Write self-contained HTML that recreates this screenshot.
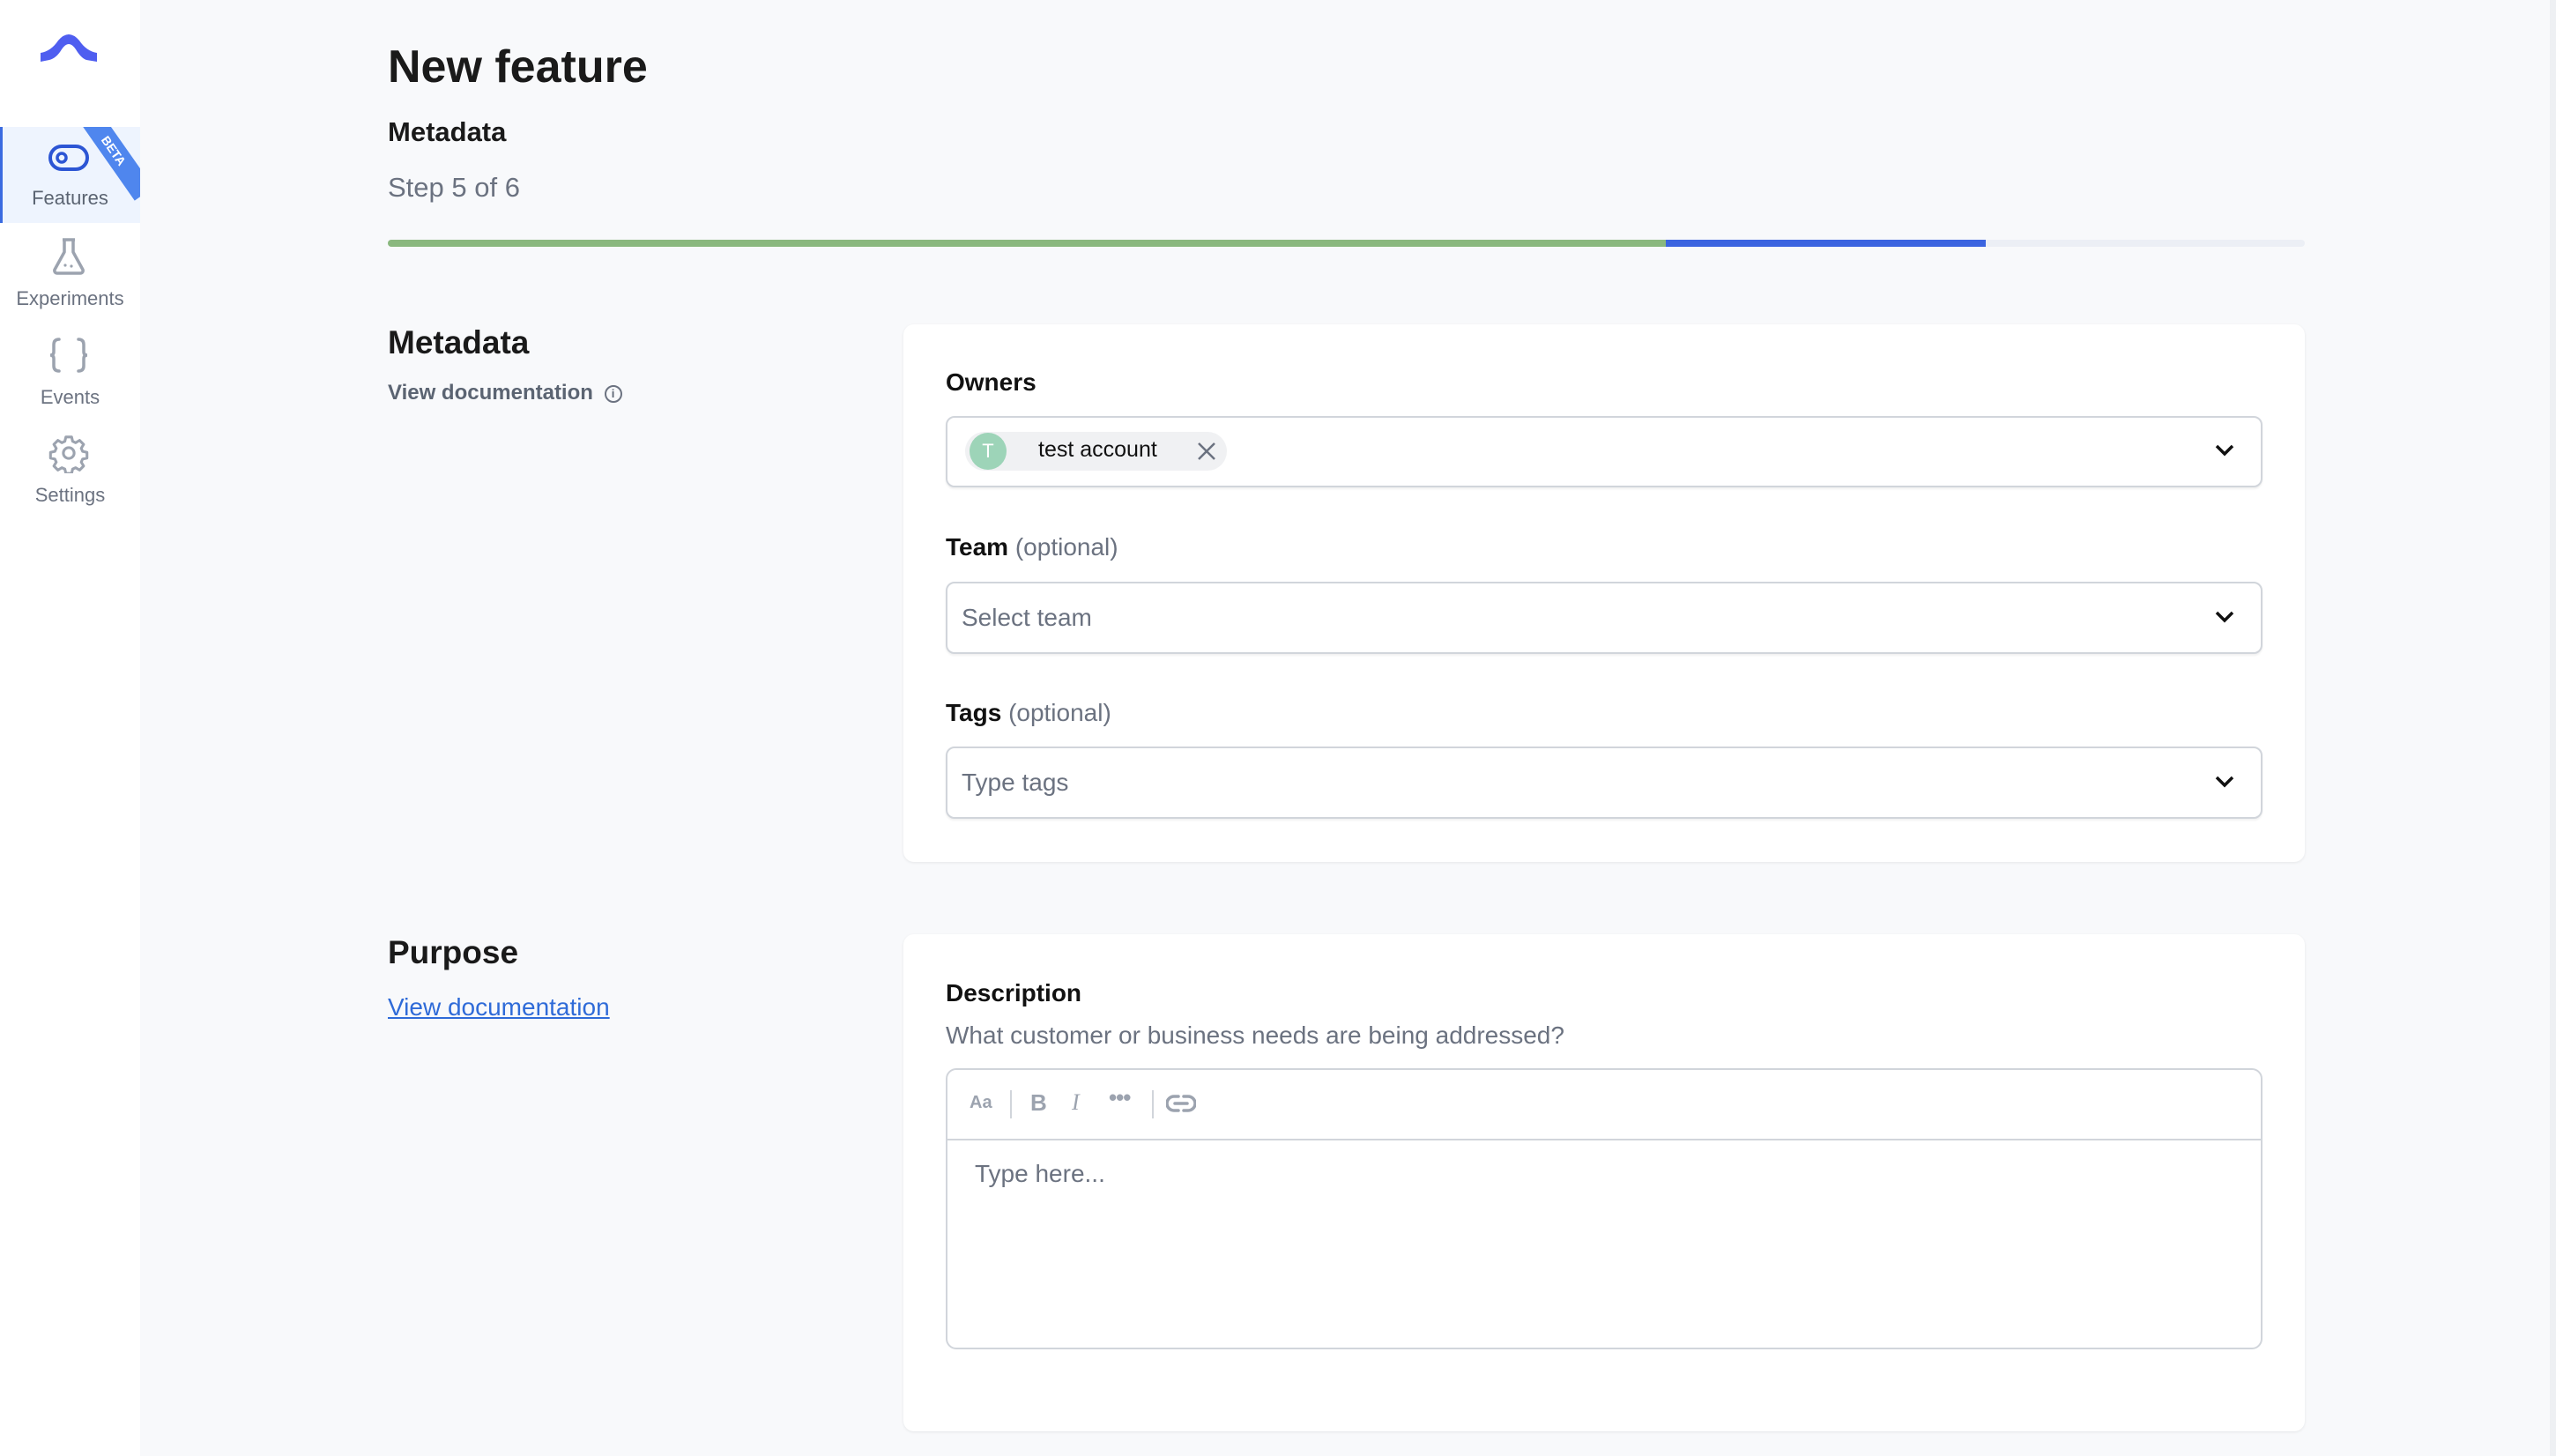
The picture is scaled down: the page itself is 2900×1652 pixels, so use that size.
<!DOCTYPE html>
<html><head><meta charset="utf-8"><style>
*{box-sizing:border-box;margin:0;padding:0}
body{width:2900px;height:1652px;background:#f8f9fb;font-family:"Liberation Sans",sans-serif;position:relative;overflow:hidden;color:#1a1a1a}
.abs{position:absolute}
.side{left:0;top:0;width:159px;height:1652px;background:#fff}
.nav{left:0;width:159px;text-align:center;color:#6b7280;font-size:22px}
.card{background:#fff;border-radius:12px;box-shadow:0 1px 3px rgba(0,0,0,.08)}
.lbl{font-size:28px;font-weight:bold;color:#111}
.opt{font-weight:normal;color:#6b7280}
.inp{border:2px solid #d1d5db;border-radius:10px;background:#fff;box-shadow:0 2px 2px rgba(0,0,0,.06)}
.ph{font-size:28px;color:#6b7280}
</style></head><body>
<div class="abs side"></div>
<div class="abs" style="left:2893px;top:0;width:7px;height:1652px;background:#eef0f3"></div>
<svg class="abs" style="left:44px;top:36px" width="68" height="34" viewBox="0 0 68 34"><path d="M2 24 Q14 22 22 10 Q34 -4 46 10 Q54 22 66 24 L66 34 L54 32 Q48 30 42 20 Q34 8 26 20 Q20 30 12 32 L2 34Z" fill="#4f5ef0"/></svg>
<div class="abs" style="left:0;top:144px;width:159px;height:109px;background:#eef4fe;border-left:3px solid #3b6be0;overflow:hidden">
<div style="position:absolute;right:-30px;top:14px;width:120px;height:26px;background:#4f86ee;transform:rotate(55deg);color:#fff;font-size:14px;font-weight:bold;text-align:center;line-height:26px">BETA</div>
</div>
<svg class="abs" style="left:55px;top:164px" width="46" height="30" viewBox="0 0 46 30"><rect x="2" y="2" width="42" height="26" rx="13" fill="none" stroke="#2c55d4" stroke-width="4"/><circle cx="15" cy="15" r="5" fill="none" stroke="#2c55d4" stroke-width="3.5"/></svg>
<div class="abs nav" style="top:212px;color:#5b6472">Features</div>
<svg class="abs" style="left:59px;top:270px" width="38" height="42" viewBox="0 0 38 42"><path d="M12 2h14M14 2v14L3 36a3 3 0 0 0 3 4h26a3 3 0 0 0 3-4L24 16V2" fill="none" stroke="#9ca3af" stroke-width="3.5" stroke-linejoin="round"/><circle cx="15" cy="31" r="1.6" fill="#9ca3af"/><circle cx="22" cy="32" r="1.6" fill="#9ca3af"/></svg>
<div class="abs nav" style="top:326px">Experiments</div>
<svg class="abs" style="left:55px;top:382px" width="46" height="42" viewBox="0 0 46 42"><path d="M12 3Q6 3 6 9v8Q6 21 2 21Q6 21 6 25v8q0 6 6 6M34 3q6 0 6 6v8q0 4 4 4q-4 0-4 4v8q0 6-6 6" fill="none" stroke="#9ca3af" stroke-width="3.5" stroke-linecap="round"/></svg>
<div class="abs nav" style="top:438px">Events</div>
<svg class="abs" style="left:55px;top:491px" width="46" height="46" viewBox="0 0 24 24"><path d="M10.3 2.5h3.4l.6 2.6 1.8.8 2.3-1.4 2.4 2.4-1.4 2.3.8 1.8 2.6.6v3.4l-2.6.6-.8 1.8 1.4 2.3-2.4 2.4-2.3-1.4-1.8.8-.6 2.6h-3.4l-.6-2.6-1.8-.8-2.3 1.4-2.4-2.4 1.4-2.3-.8-1.8-2.6-.6v-3.4l2.6-.6.8-1.8-1.4-2.3 2.4-2.4 2.3 1.4 1.8-.8z" fill="none" stroke="#9ca3af" stroke-width="1.6" stroke-linejoin="round"/><circle cx="12" cy="12" r="3.2" fill="none" stroke="#9ca3af" stroke-width="1.6"/></svg>
<div class="abs nav" style="top:549px">Settings</div>

<div class="abs" style="left:440px;top:46px;font-size:52px;font-weight:bold;color:#1a1a1a">New feature</div>
<div class="abs" style="left:440px;top:132px;font-size:31px;font-weight:bold">Metadata</div>
<div class="abs" style="left:440px;top:195px;font-size:31px;color:#6b7280">Step 5 of 6</div>
<div class="abs" style="left:440px;top:272px;width:2175px;height:8px;background:#eceff5;border-radius:4px"></div>
<div class="abs" style="left:440px;top:272px;width:1450px;height:8px;background:#8ab87e;border-radius:4px 0 0 4px"></div>
<div class="abs" style="left:1890px;top:272px;width:363px;height:8px;background:#3b64e0"></div>

<div class="abs" style="left:440px;top:368px;font-size:37px;font-weight:bold">Metadata</div>
<div class="abs" style="left:440px;top:432px;font-size:24px;font-weight:bold;color:#5b6472">View documentation <span style="display:inline-block;width:20px;height:20px;border:2px solid #6b7280;border-radius:50%;font-size:13px;text-align:center;line-height:16px;vertical-align:middle;margin-left:6px">i</span></div>

<div class="abs card" style="left:1025px;top:368px;width:1590px;height:610px"></div>
<div class="abs lbl" style="left:1073px;top:418px">Owners</div>
<div class="abs inp" style="left:1073px;top:472px;width:1494px;height:81px"></div>
<div class="abs" style="left:1095px;top:490px;width:297px;height:44px;background:#f0f1f3;border-radius:22px"></div>
<div class="abs" style="left:1100px;top:491px;width:42px;height:42px;border-radius:50%;background:#9dd4b8;color:#fff;font-size:22px;text-align:center;line-height:42px">T</div>
<div class="abs" style="left:1178px;top:496px;font-size:25px;color:#111">test account</div>
<svg class="abs" style="left:1357px;top:500px" width="24" height="24" viewBox="0 0 24 24"><path d="M3 3L21 21M21 3L3 21" stroke="#6b7280" stroke-width="2.5"/></svg>
<svg class="abs" style="left:2513px;top:503px" width="22" height="16" viewBox="0 0 22 16"><path d="M2 3l9 9 9-9" fill="none" stroke="#111" stroke-width="3.5"/></svg>

<div class="abs lbl" style="left:1073px;top:605px">Team <span class="opt">(optional)</span></div>
<div class="abs inp" style="left:1073px;top:660px;width:1494px;height:82px"></div>
<div class="abs ph" style="left:1091px;top:685px">Select team</div>
<svg class="abs" style="left:2513px;top:692px" width="22" height="16" viewBox="0 0 22 16"><path d="M2 3l9 9 9-9" fill="none" stroke="#111" stroke-width="3.5"/></svg>

<div class="abs lbl" style="left:1073px;top:793px">Tags <span class="opt">(optional)</span></div>
<div class="abs inp" style="left:1073px;top:847px;width:1494px;height:82px"></div>
<div class="abs ph" style="left:1091px;top:872px">Type tags</div>
<svg class="abs" style="left:2513px;top:879px" width="22" height="16" viewBox="0 0 22 16"><path d="M2 3l9 9 9-9" fill="none" stroke="#111" stroke-width="3.5"/></svg>

<div class="abs" style="left:440px;top:1060px;font-size:37px;font-weight:bold">Purpose</div>
<div class="abs" style="left:440px;top:1127px;font-size:28px;color:#2f6bd8;text-decoration:underline">View documentation</div>

<div class="abs card" style="left:1025px;top:1060px;width:1590px;height:564px"></div>
<div class="abs lbl" style="left:1073px;top:1111px">Description</div>
<div class="abs ph" style="left:1073px;top:1159px">What customer or business needs are being addressed?</div>
<div class="abs" style="left:1073px;top:1212px;width:1494px;height:319px;border:2px solid #d1d5db;border-radius:12px;background:#fff"></div>
<div class="abs" style="left:1075px;top:1292px;width:1490px;height:2px;background:#d1d5db"></div>
<div class="abs" style="left:1100px;top:1240px;font-size:20px;font-weight:bold;color:#9ca3af">Aa</div>
<div class="abs" style="left:1146px;top:1237px;width:2px;height:32px;background:#d1d5db"></div>
<div class="abs" style="left:1169px;top:1236px;font-size:26px;font-weight:bold;color:#9ca3af">B</div>
<div class="abs" style="left:1216px;top:1236px;font-size:26px;font-style:italic;color:#9ca3af;font-family:'Liberation Serif',serif">I</div>
<div class="abs" style="left:1258px;top:1230px;font-size:26px;font-weight:bold;color:#9ca3af;letter-spacing:-1px">•••</div>
<div class="abs" style="left:1307px;top:1237px;width:2px;height:32px;background:#d1d5db"></div>
<svg class="abs" style="left:1323px;top:1240px" width="34" height="24" viewBox="0 0 34 24"><path d="M14 4H9a8 8 0 0 0 0 16h5M20 4h5a8 8 0 0 1 0 16h-5M10 12h14" fill="none" stroke="#9ca3af" stroke-width="3.5" stroke-linecap="round"/></svg>
<div class="abs ph" style="left:1106px;top:1316px">Type here...</div>
</body></html>
